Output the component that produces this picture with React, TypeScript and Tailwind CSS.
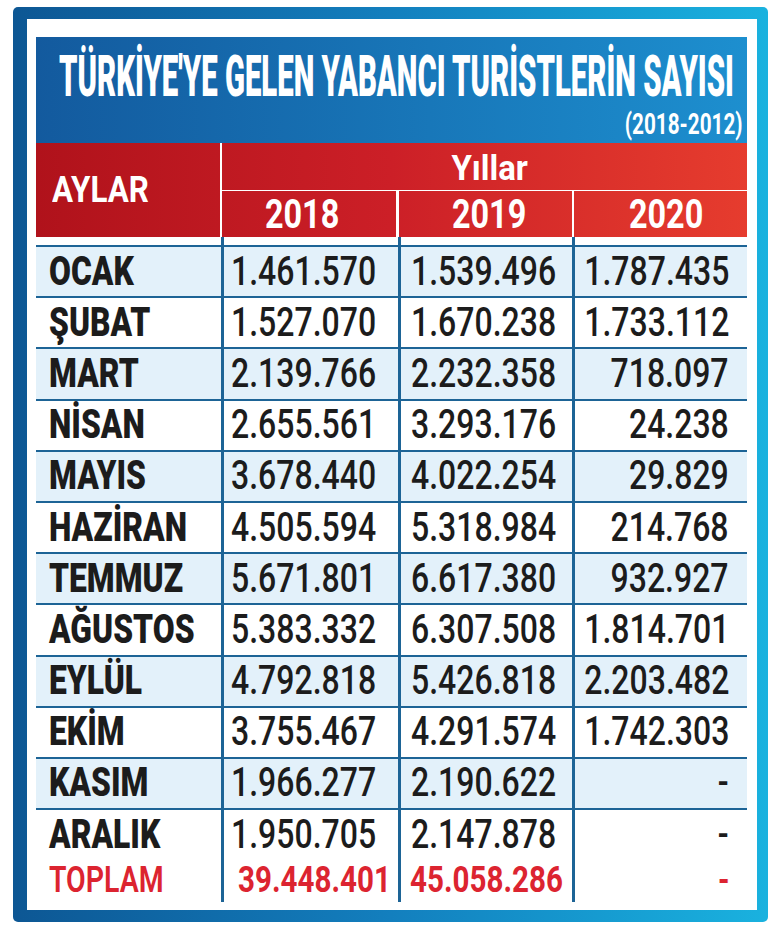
import React from "react";

const rows: [string, string, string, string][] = [
  ["OCAK", "1.461.570", "1.539.496", "1.787.435"],
  ["ŞUBAT", "1.527.070", "1.670.238", "1.733.112"],
  ["MART", "2.139.766", "2.232.358", "718.097"],
  ["NİSAN", "2.655.561", "3.293.176", "24.238"],
  ["MAYIS", "3.678.440", "4.022.254", "29.829"],
  ["HAZİRAN", "4.505.594", "5.318.984", "214.768"],
  ["TEMMUZ", "5.671.801", "6.617.380", "932.927"],
  ["AĞUSTOS", "5.383.332", "6.307.508", "1.814.701"],
  ["EYLÜL", "4.792.818", "5.426.818", "2.203.482"],
  ["EKİM", "3.755.467", "4.291.574", "1.742.303"],
  ["KASIM", "1.966.277", "2.190.622", "-"],
  ["ARALIK", "1.950.705", "2.147.878", "-"],
];

function Month({ children }: { children: React.ReactNode }) {
  return (
    <span className="inline-block origin-left scale-x-[0.795] whitespace-nowrap text-[40px] font-black leading-none text-[#1c1c1c]">
      {children}
    </span>
  );
}

function Num({ children, right }: { children: React.ReactNode; right?: boolean }) {
  return (
    <span
      className={
        right
          ? "inline-block origin-right scale-x-[0.8] whitespace-nowrap text-[40px] font-medium leading-none text-[#1c1c1c]"
          : "inline-block origin-left scale-x-[0.8] whitespace-nowrap text-[40px] font-medium leading-none text-[#1c1c1c]"
      }
    >
      {children}
    </span>
  );
}

export default function App() {
  return (
    <div className="h-[930px] w-[770px] bg-white pl-[13px] pt-[7px] font-['Roboto',sans-serif]">
      <div className="h-[915px] w-[755px] rounded-[5px] bg-linear-to-r from-[#0d5794] via-[#137fbe] to-[#1ab2df] pb-[12px] pl-[14px] pr-[11px] pt-[12px]">
        <div className="flex h-full flex-col bg-white pl-[9px] pr-[10px] pt-[18px]">
          {/* Title */}
          <div className="flex h-[106px] shrink-0 flex-col overflow-hidden bg-linear-to-r from-[#135a9e] to-[#1d8fcf] pt-[10px] text-white">
            <div className="h-[56px] whitespace-nowrap pl-[23px]">
              <span className="inline-block origin-left scale-x-[0.506] text-[58px] font-black leading-none">
                TÜRKİYE'YE GELEN YABANCI TURİSTLERİN SAYISI
              </span>
            </div>
            <div className="mt-[6px] flex h-[30px] justify-end pr-[4px]">
              <span className="inline-block origin-right scale-x-[0.69] whitespace-nowrap text-[30px] font-bold leading-none">
                (2018-2012)
              </span>
            </div>
          </div>

          {/* Header */}
          <div className="flex h-[94px] shrink-0 bg-linear-to-r from-[#b0121b] via-[#cc1f27] to-[#e63c2e] text-white">
            <div className="flex w-[186px] min-w-0 shrink-0 items-center border-r-2 border-white pl-[16px]">
              <span className="inline-block origin-left scale-x-[0.87] text-[36px] font-bold leading-none">AYLAR</span>
            </div>
            <div className="flex min-w-0 flex-1 flex-col">
              <div className="flex h-[48px] items-center justify-center border-b-[1.5px] border-white pl-[11px] pt-[4px]">
                <span className="inline-block scale-x-[0.94] text-[35px] font-bold leading-none">Yıllar</span>
              </div>
              <div className="flex flex-1">
                <div className="flex w-[177px] min-w-0 shrink-0 items-center justify-center border-r-[3px] border-white pr-[14px]">
                  <span className="inline-block scale-x-[0.79] text-[41px] font-bold leading-none">2018</span>
                </div>
                <div className="flex w-[175px] min-w-0 shrink-0 items-center justify-center border-r-2 border-white pl-[8px]">
                  <span className="inline-block scale-x-[0.79] text-[41px] font-bold leading-none">2019</span>
                </div>
                <div className="flex min-w-0 flex-1 items-center justify-center pl-[12px]">
                  <span className="inline-block scale-x-[0.79] text-[41px] font-bold leading-none">2020</span>
                </div>
              </div>
            </div>
          </div>

          {/* spacer with column lines */}
          <div className="flex h-[8px] shrink-0">
            <div className="w-[185px] shrink-0" />
            <div className="w-[177px] shrink-0 border-l-[3px] border-[#1d6496]" />
            <div className="w-[174px] shrink-0 border-l-[3px] border-[#1d6496]" />
            <div className="min-w-0 flex-1 border-l-[3px] border-[#1d6496]" />
          </div>

          {rows.map((r, i) => (
            <div
              key={r[0]}
              className={
                i % 2 === 0
                  ? "flex h-[51.2px] shrink-0 border-t-2 border-[#1d6496] bg-[#e3f1fa]"
                  : "flex h-[51.2px] shrink-0 border-t-2 border-[#1d6496] bg-white"
              }
            >
              <div className="flex w-[185px] min-w-0 shrink-0 items-center pl-[13px]">
                <Month>{r[0]}</Month>
              </div>
              <div className="flex w-[177px] min-w-0 shrink-0 items-center border-l-[3px] border-[#1d6496] pl-[7px]">
                <Num>{r[1]}</Num>
              </div>
              <div className="flex w-[174px] min-w-0 shrink-0 items-center border-l-[3px] border-[#1d6496] pl-[10px]">
                <Num>{r[2]}</Num>
              </div>
              <div className="flex min-w-0 flex-1 items-center justify-end border-l-[3px] border-[#1d6496] pr-[18px]">
                <Num right>{r[3]}</Num>
              </div>
            </div>
          ))}

          {/* Total row */}
          <div className="flex h-[42.6px] shrink-0 bg-white text-[#dc2430]">
            <div className="flex w-[185px] min-w-0 shrink-0 items-center pl-[13px]">
              <span className="inline-block origin-left scale-x-[0.78] text-[36.5px] font-semibold leading-none">TOPLAM</span>
            </div>
            <div className="flex w-[177px] min-w-0 shrink-0 items-center border-l-[3px] border-[#1d6496] pl-[14px]">
              <span className="inline-block origin-left scale-x-[0.81] whitespace-nowrap text-[36.5px] font-bold leading-none">39.448.401</span>
            </div>
            <div className="flex w-[174px] min-w-0 shrink-0 items-center border-l-[3px] border-[#1d6496] pl-[9px]">
              <span className="inline-block origin-left scale-x-[0.81] whitespace-nowrap text-[36.5px] font-bold leading-none">45.058.286</span>
            </div>
            <div className="flex min-w-0 flex-1 items-center justify-end border-l-[3px] border-[#1d6496] pr-[18px]">
              <span className="inline-block origin-right scale-x-[0.8] text-[36.5px] font-bold leading-none">-</span>
            </div>
          </div>
        </div>
      </div>
    </div>
  );
}
